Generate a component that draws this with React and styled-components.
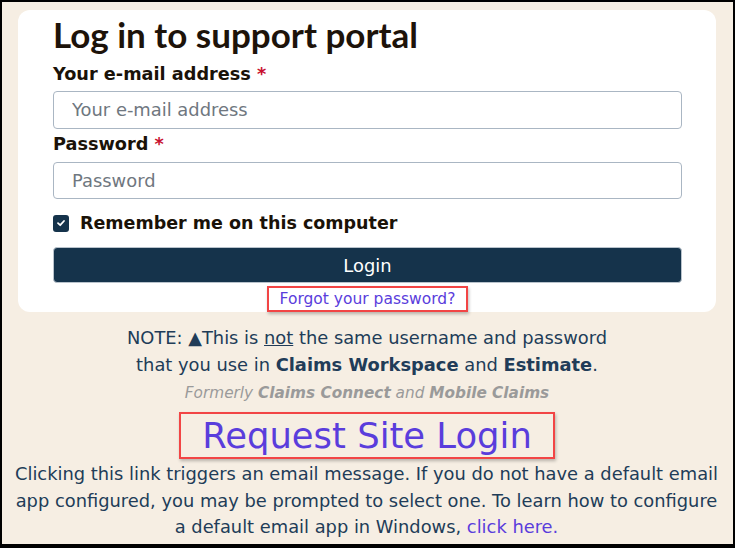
import React from "react";
import styled, { createGlobalStyle } from "styled-components";

const Global = createGlobalStyle`
  html, body { margin: 0; padding: 0; }
  body { background: #000; font-family: "DejaVu Sans", Verdana, sans-serif; }
  * { box-sizing: border-box; }
`;

const Frame = styled.div`
  width: 735px;
  height: 548px;
  border-style: solid;
  border-color: #000;
  border-width: 2px 2px 4px 2px;
  background: #f6eee3;
  padding: 8px 17px 0 16px;
  overflow: hidden;
`;

const Card = styled.div`
  background: #fff;
  border-radius: 12px;
  padding: 4px 34px 0 35px;
  display: flex;
  flex-direction: column;
  height: 302px;
`;

const Title = styled.h1`
  margin: 0;
  font-family: "Lato", "Open Sans", sans-serif;
  font-weight: 700;
  font-size: 35px;
  line-height: 40px;
  color: #1d130a;
`;

const Label = styled.label`
  display: block;
  font-weight: 700;
  font-size: 17.7px;
  line-height: 24px;
  color: #1a1208;
  margin-top: ${(p) => p.$mt || 0}px;
`;

const Req = styled.span`
  color: #c8102e;
`;

const Input = styled.input`
  display: block;
  width: 100%;
  height: 38px;
  margin-top: ${(p) => p.$mt || 0}px;
  border: 1px solid #aab6c3;
  border-radius: 4px;
  padding: 0 18px;
  font-family: "DejaVu Sans", Verdana, sans-serif;
  font-size: 17.9px;
  color: #333;
  background: #fff;
  &::placeholder { color: #6f7780; }
`;

const CheckRow = styled.div`
  display: flex;
  align-items: center;
  gap: 11px;
  margin-top: 12px;
  height: 24px;
`;

const CheckBox = styled.span`
  width: 16px;
  height: 17px;
  border-radius: 3px;
  background: #15334b;
  display: inline-flex;
  align-items: center;
  justify-content: center;
  flex: none;
`;

const CheckText = styled.span`
  font-weight: 700;
  font-size: 17.5px;
  color: #1a1208;
`;

const Button = styled.button`
  margin-top: 12px;
  height: 36px;
  width: 100%;
  border: 1px solid #b9c3cc;
  border-radius: 4px;
  background: #15334b;
  color: #fff;
  font-family: "DejaVu Sans", Verdana, sans-serif;
  font-size: 17.9px;
`;

const ForgotWrap = styled.div`
  display: flex;
  justify-content: center;
  margin-top: 3px;
`;

const Marked = styled.a`
  display: inline-block;
  border: 2px solid #f24545;
  box-shadow: 1px 2px 3px rgba(0, 0, 0, 0.25);
  color: #5a3ddc;
  text-decoration: none;
  font-size: ${(p) => p.$size}px;
  line-height: ${(p) => p.$lh}px;
  padding: 0 ${(p) => p.$px}px;
  position: relative;
  z-index: 1;
  white-space: nowrap;
`;

const Note = styled.div`
  text-align: center;
  color: #213c58;
  font-size: 17.85px;
  line-height: 27px;
  margin-top: 12px;
`;

const Under = styled.span`
  text-decoration: underline;
`;

const Formerly = styled.div`
  text-align: center;
  font-style: italic;
  color: #9a9a9a;
  font-size: 15.3px;
  line-height: 20px;
  margin-top: 5px;
`;

const Center = styled.div`
  display: flex;
  justify-content: center;
  margin-top: 9px;
`;

const Para = styled.p`
  margin: 2px -5px 0 -6px;
  text-align: center;
  color: #213c58;
  font-size: 17.85px;
  line-height: 26.5px;
`;

const Link = styled.a`
  color: #5a3ddc;
  text-decoration: none;
`;

export default function App() {
  return (
    <>
      <Global />
      <Frame>
        <Card>
          <Title>Log in to support portal</Title>
          <Label $mt={8}>
            Your e-mail address <Req>*</Req>
          </Label>
          <Input $mt={5} placeholder="Your e-mail address" />
          <Label $mt={3}>
            Password <Req>*</Req>
          </Label>
          <Input $mt={6} placeholder="Password" type="password" />
          <CheckRow>
            <CheckBox>
              <svg width="10" height="10" viewBox="0 0 10 10">
                <path d="M2 5.2 L4.2 7.2 L8 3" fill="none" stroke="#fff" strokeWidth="1.8" strokeLinecap="round" strokeLinejoin="round" />
              </svg>
            </CheckBox>
            <CheckText>Remember me on this computer</CheckText>
          </CheckRow>
          <Button>Login</Button>
          <ForgotWrap>
            <Marked href="#" $size={15.5} $lh={22} $px={11}>Forgot your password?</Marked>
          </ForgotWrap>
        </Card>
        <Note>
          NOTE: ▲This is <Under>not</Under> the same username and password
          <br />
          that you use in <b>Claims Workspace</b> and <b>Estimate</b>.
        </Note>
        <Formerly>
          Formerly <b>Claims Connect</b> and <b>Mobile Claims</b>
        </Formerly>
        <Center>
          <Marked href="#" $size={35.4} $lh={43} $px={21}>Request Site Login</Marked>
        </Center>
        <Para>
          Clicking this link triggers an email message. If you do not have a default email app configured, you may be prompted to select one. To learn how to configure a default email app in Windows, <Link href="#">click here.</Link>
        </Para>
      </Frame>
    </>
  );
}
